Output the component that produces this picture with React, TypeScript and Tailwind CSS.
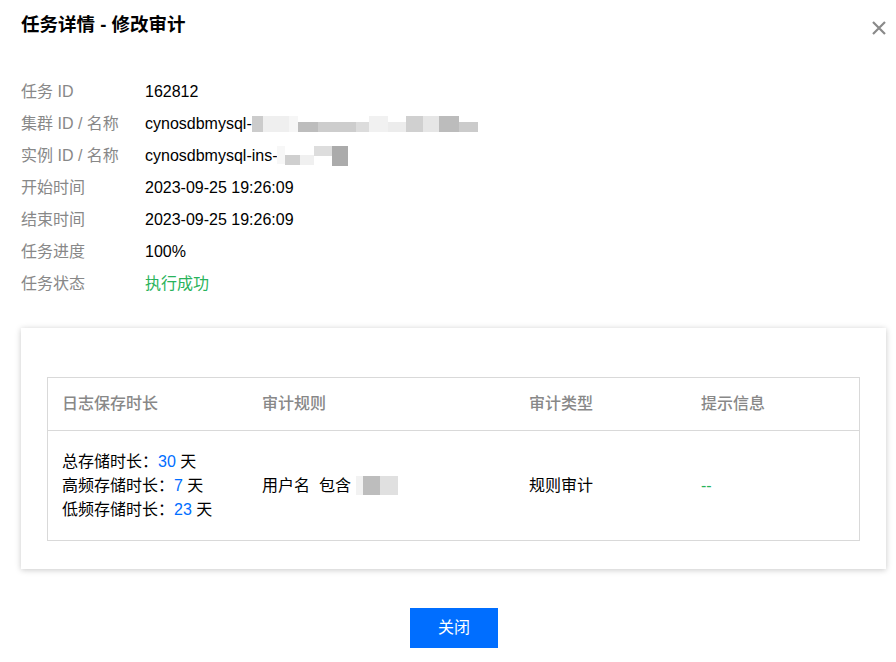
import React from "react";

const font = { fontFamily: '"Liberation Sans", "Noto Sans CJK SC", sans-serif' };

function Mosaic({ blocks }: { blocks: [number, number, number, string][] }) {
  // [width, height, offsetTop, color]
  return (
    <span className="inline-flex h-[20px] items-start">
      {blocks.map(([w, h, t, c], i) => (
        <span key={i} className="block" style={{ width: w, height: h, marginTop: t, background: c }} />
      ))}
    </span>
  );
}

const rows: { label: string; value: React.ReactNode }[] = [
  { label: "任务 ID", value: "162812" },
  {
    label: "集群 ID / 名称",
    value: (
      <span className="flex items-center">
        cynosdbmysql-
        <Mosaic
          blocks={[
            [11, 16, 2, "#cccccc"],
            [26, 16, 2, "#efefef"],
            [9, 16, 2, "#f6f6f6"],
            [20, 10, 8, "#bdbdbd"],
            [38, 10, 8, "#cdcdcd"],
            [13, 10, 8, "#dcdcdc"],
            [19, 16, 2, "#f1f1f1"],
            [18, 10, 8, "#ececec"],
            [17, 16, 2, "#d0d0d0"],
            [16, 16, 2, "#e6e6e6"],
            [20, 16, 2, "#bcbcbc"],
            [19, 10, 8, "#cbcbcb"],
          ]}
        />
      </span>
    ),
  },
  {
    label: "实例 ID / 名称",
    value: (
      <span className="flex items-center">
        cynosdbmysql-ins-
        <Mosaic
          blocks={[
            [8, 18, 0, "#f7f7f7"],
            [15, 10, 9, "#cfcfcf"],
            [14, 10, 9, "#f0f0f0"],
            [18, 10, 0, "#dddddd"],
            [16, 20, 0, "#ababab"],
          ]}
        />
      </span>
    ),
  },
  { label: "开始时间", value: "2023-09-25 19:26:09" },
  { label: "结束时间", value: "2023-09-25 19:26:09" },
  { label: "任务进度", value: "100%" },
  { label: "任务状态", value: <span className="text-[#29b35b]">执行成功</span> },
];

export default function App() {
  return (
    <div className="min-h-[662px] w-[896px] bg-white text-[16px] text-black" style={font}>
      {/* Header */}
      <div className="flex h-[50px] items-start justify-between pl-[21px] pr-[9px] pt-[12px]">
        <h1 className="text-[18.5px] font-bold leading-[26px]">任务详情 - 修改审计</h1>
        <button className="mt-[8px] flex h-[16px] w-[16px] items-center justify-center">
          <svg width="16" height="16" viewBox="0 0 16 16">
            <path d="M2 2 L14 14 M14 2 L2 14" stroke="#8a8a8a" strokeWidth="2.2" fill="none" />
          </svg>
        </button>
      </div>

      {/* Info list */}
      <div className="mt-[26px] flex flex-col px-[21px]">
        {rows.map((r) => (
          <div key={r.label} className="flex h-[32px] items-center">
            <div className="w-[124px] text-[#888]">{r.label}</div>
            <div>{r.value}</div>
          </div>
        ))}
      </div>

      {/* Audit card */}
      <div className="mx-[21px] mt-[28px] w-[865px] bg-white px-[26px] pb-[28px] pt-[49px] shadow-[0_1px_6px_rgba(0,0,0,0.22)]">
        <div className="border border-[#d9d9d9]">
          <div className="grid h-[53px] grid-cols-[200px_267px_172px_1fr] items-center border-b border-[#d9d9d9] font-medium text-[#888]">
            <div className="pl-[14px]">日志保存时长</div>
            <div className="pl-[14px]">审计规则</div>
            <div className="pl-[14px]">审计类型</div>
            <div className="pl-[14px]">提示信息</div>
          </div>
          <div className="grid h-[109px] grid-cols-[200px_267px_172px_1fr] items-center">
            <div className="pl-[14px] leading-[24px]">
              <div>
                总存储时长：<span className="text-[#006eff]">30</span> 天
              </div>
              <div>
                高频存储时长：<span className="text-[#006eff]">7</span> 天
              </div>
              <div>
                低频存储时长：<span className="text-[#006eff]">23</span> 天
              </div>
            </div>
            <div className="flex items-center pl-[14px]">
              用户名&nbsp; 包含
              <span className="ml-[5px] flex h-[19px]">
                <span className="block w-[7px] bg-[#f2f2f2]" />
                <span className="block w-[17px] bg-[#bdbdbd]" />
                <span className="block w-[18px] bg-[#e0e0e0]" />
              </span>
            </div>
            <div className="pl-[14px]">规则审计</div>
            <div className="pl-[14px] text-[#29b35b]">--</div>
          </div>
        </div>
      </div>

      {/* Footer */}
      <div className="flex justify-center pl-[12px] pt-[39px]">
        <button className="h-[40px] w-[88px] bg-[#006eff] text-[16px] text-white">关闭</button>
      </div>
    </div>
  );
}
